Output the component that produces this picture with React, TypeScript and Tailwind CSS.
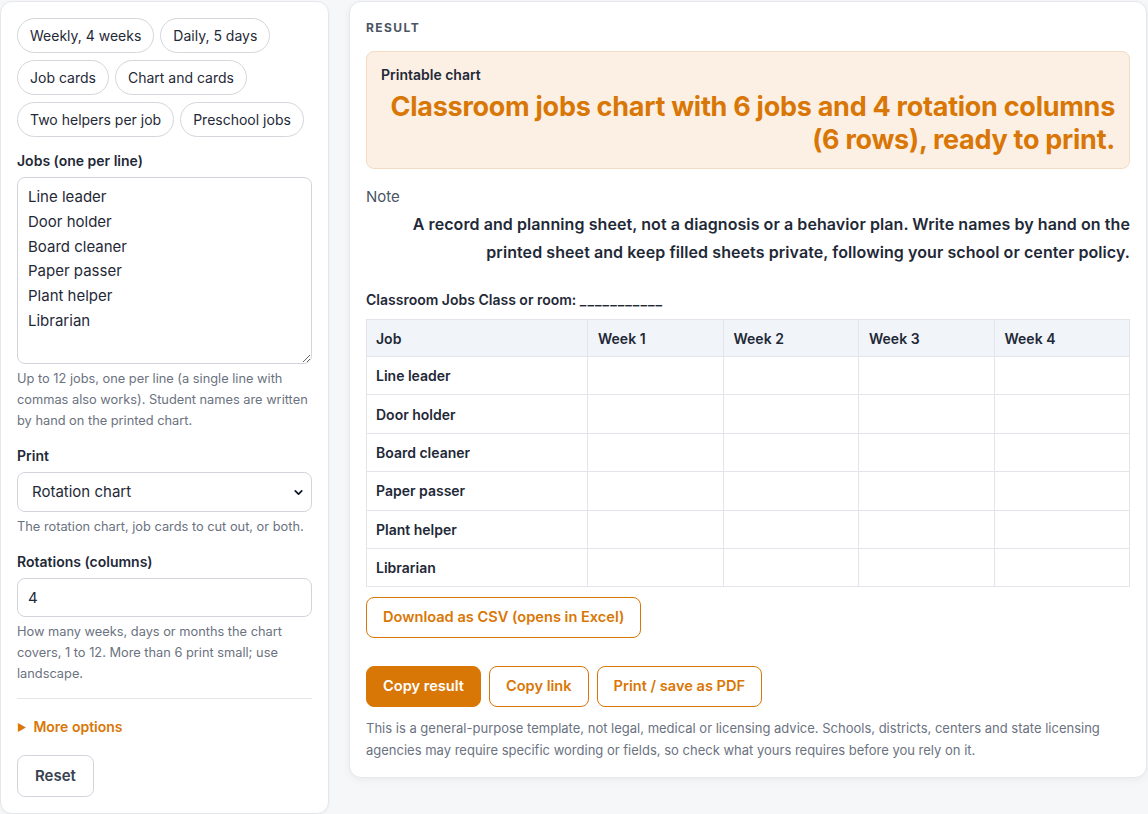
import React from "react";
import { ChevronDown } from "lucide-react";

const presets = [
  ["Weekly, 4 weeks", "Daily, 5 days"],
  ["Job cards", "Chart and cards"],
  ["Two helpers per job", "Preschool jobs"],
];

const jobs = ["Line leader", "Door holder", "Board cleaner", "Paper passer", "Plant helper", "Librarian"];
const weeks = ["Week 1", "Week 2", "Week 3", "Week 4"];

function Chip({ label }: { label: string }) {
  return (
    <button className="h-[35px] px-[12px] rounded-full border border-[#d4d6db] bg-white text-[14px] text-[#1f2937] leading-none">
      {label}
    </button>
  );
}

function Help({ children }: { children: React.ReactNode }) {
  return <p className="mt-[4px] text-[12.8px] leading-[21px] text-[#6b7280]">{children}</p>;
}

function Label({ children }: { children: React.ReactNode }) {
  return <div className="text-[14px] font-semibold text-[#1f2937] leading-[20px] mb-[6px]">{children}</div>;
}

export default function App() {
  return (
    <div
      className="min-h-[814px] bg-[#f6f7f9] text-[#1f2937]"
      style={{ fontFamily: "Inter, 'Noto Sans', sans-serif" }}
    >
      <div className="grid grid-cols-[329px_798px] gap-[20px] items-start pt-[1px]">
        {/* Settings panel */}
        <aside className="bg-white border border-[#e5e7eb] rounded-[12px] p-[16px] shadow-[0_1px_3px_rgba(0,0,0,0.04)]">
          <div className="flex flex-col gap-[7px]">
            {presets.map((row, i) => (
              <div key={i} className="flex gap-[6px]">
                {row.map((p) => (
                  <Chip key={p} label={p} />
                ))}
              </div>
            ))}
          </div>

          <div className="mt-[14px]">
            <Label>Jobs (one per line)</Label>
            <textarea
              className="block w-full h-[187px] rounded-[8px] border border-[#d1d5db] px-[10px] py-[7px] text-[15px] leading-[24.8px] text-[#1f2937] resize-y outline-none"
              defaultValue={jobs.join("\n")}
            />
            <Help>
              Up to 12 jobs, one per line (a single line with commas also works). Student names are written by hand on the printed chart.
            </Help>
          </div>

          <div className="mt-[15px]">
            <Label>Print</Label>
            <div className="relative">
              <select className="appearance-none block w-full h-[40px] rounded-[8px] border border-[#d1d5db] bg-white pl-[14px] pr-[30px] text-[15px] text-[#1f2937] outline-none">
                <option>Rotation chart</option>
                <option>Job cards</option>
                <option>Chart and cards</option>
              </select>
              <ChevronDown
                size={13}
                strokeWidth={3.2}
                className="absolute right-[7px] top-[14px] text-[#111827] pointer-events-none"
              />
            </div>
            <Help>The rotation chart, job cards to cut out, or both.</Help>
          </div>

          <div className="mt-[15px]">
            <Label>Rotations (columns)</Label>
            <input
              className="block w-full h-[39px] rounded-[8px] border border-[#d1d5db] px-[10px] text-[15px] text-[#1f2937] outline-none"
              defaultValue="4"
            />
            <Help>
              How many weeks, days or months the chart covers, 1 to 12. More than 6 print small; use landscape.
            </Help>
          </div>

          <div className="mt-[14px] border-t border-[#e5e7eb]" />

          <div className="mt-[18px] flex items-center gap-[7px] text-[14px] font-semibold text-[#d97706] leading-[20px]">
            <span className="text-[10px] leading-none">▶</span>
            <span>More options</span>
          </div>

          <button className="mt-[18px] h-[42px] px-[17px] rounded-[8px] border border-[#d1d5db] bg-white text-[15px] font-semibold text-[#374151]">
            Reset
          </button>
        </aside>

        {/* Result panel */}
        <main className="bg-white border border-[#e5e7eb] rounded-[12px] p-[16px] shadow-[0_2px_8px_rgba(0,0,0,0.05)]">
          <div className="text-[12px] font-bold tracking-[0.12em] text-[#4b5563] leading-[20px]">RESULT</div>

          <div className="mt-[13px] rounded-[8px] border border-[#f3dcc3] bg-[#fcf0e5] px-[14px] pt-[13px] pb-[12px]">
            <div className="text-[14px] font-semibold text-[#1f2937] leading-[20px]">Printable chart</div>
            <div className="mt-[5px] text-right text-[27px] font-bold leading-[33px] text-[#d97706] tracking-[-0.01em]">
              Classroom jobs chart with 6 jobs and 4 rotation columns (6 rows), ready to print.
            </div>
          </div>

          <div className="mt-[17px] text-[15px] text-[#4b5563] leading-[22px]">Note</div>
          <p className="mt-[2px] text-right text-[16px] font-semibold leading-[28px] tracking-[0.08px] text-[#1f2937]">
            A record and planning sheet, not a diagnosis or a behavior plan. Write names by hand on the printed sheet and keep filled sheets private, following your school or center policy.
          </p>

          <div className="mt-[24px] text-[14px] font-semibold leading-[20px] text-[#1f2937]">
            Classroom Jobs Class or room: <span className="tracking-[1px]">___________</span>
          </div>

          <table className="mt-[9px] w-full table-fixed border-collapse text-[14px] text-[#1f2937]">
            <colgroup>
              <col className="w-[221px]" />
              <col />
              <col />
              <col />
              <col />
            </colgroup>
            <thead>
              <tr className="bg-[#f1f5f9]">
                <th className="h-[37px] border border-[#e2e5ea] px-[9px] text-left font-semibold">Job</th>
                {weeks.map((w) => (
                  <th key={w} className="h-[37px] border border-[#e2e5ea] px-[10px] text-left font-semibold">
                    {w}
                  </th>
                ))}
              </tr>
            </thead>
            <tbody>
              {jobs.map((j) => (
                <tr key={j}>
                  <td className="h-[38.4px] border border-[#e2e5ea] px-[9px] font-semibold">{j}</td>
                  {weeks.map((w) => (
                    <td key={w} className="border border-[#e2e5ea]" />
                  ))}
                </tr>
              ))}
            </tbody>
          </table>

          <button className="mt-[10px] h-[41px] px-[16px] rounded-[8px] border border-[#d97706] bg-white text-[14.6px] font-semibold text-[#d97706]">
            Download as CSV (opens in Excel)
          </button>

          <div className="mt-[28px] flex gap-[8px]">
            <button className="h-[41px] px-[16px] rounded-[8px] border border-[#d97706] bg-[#d97706] text-[14.6px] font-semibold text-white">
              Copy result
            </button>
            <button className="h-[41px] px-[16px] rounded-[8px] border border-[#d97706] bg-white text-[14.6px] font-semibold text-[#d97706]">
              Copy link
            </button>
            <button className="h-[41px] px-[16px] rounded-[8px] border border-[#d97706] bg-white text-[14.6px] font-semibold text-[#d97706]">
              Print / save as PDF
            </button>
          </div>

          <p className="mt-[10px] text-[13px] leading-[22px] text-[#6b7280]">
            This is a general-purpose template, not legal, medical or licensing advice. Schools, districts, centers and state licensing agencies may require specific wording or fields, so check what yours requires before you rely on it.
          </p>
        </main>
      </div>
    </div>
  );
}
